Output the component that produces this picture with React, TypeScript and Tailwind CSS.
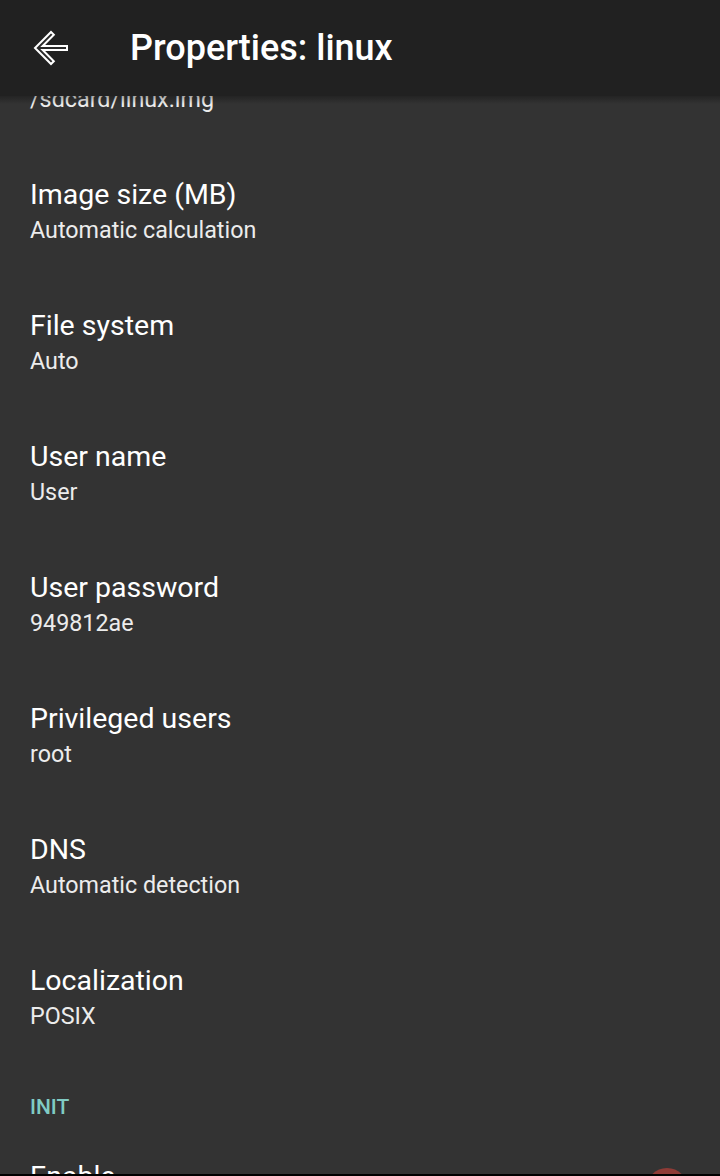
const rows = [
  { title: 'Image location', value: '/sdcard/linux.img' },
  { title: 'Image size (MB)', value: 'Automatic calculation' },
  { title: 'File system', value: 'Auto' },
  { title: 'User name', value: 'User' },
  { title: 'User password', value: '949812ae' },
  { title: 'Privileged users', value: 'root' },
  { title: 'DNS', value: 'Automatic detection' },
  { title: 'Localization', value: 'POSIX' },
];

const BackArrow = () => (
  <svg width="48" height="48" viewBox="0 0 24 24" className="shrink-0">
    <path
      d="M20 11H7.83l5.59-5.59L12 4l-8 8 8 8 1.41-1.41L7.83 13H20v-2z"
      fill="#2a2a2a"
      stroke="#ffffff"
      strokeWidth="1"
      strokeLinejoin="miter"
    />
  </svg>
);

const Row = ({ title, value }: { title: string; value: string }) => (
  <div className="h-[131px] flex flex-col justify-center px-[30px]">
    <div className="text-[28.5px] leading-[34px] text-white whitespace-nowrap">{title}</div>
    <div className="text-[23.3px] leading-[36px] text-[#ececec] whitespace-nowrap">{value}</div>
  </div>
);

const App = () => {
  return (
    <div className="relative h-[1176px] w-[720px] overflow-hidden bg-[#333333] font-['Roboto','Liberation_Sans',sans-serif] flex flex-col">
      {/* Toolbar */}
      <div className="absolute top-0 left-0 right-0 z-10">
        <div className="h-[96px] bg-[#212121] flex items-center pl-[27px]">
          <BackArrow />
          <h1 className="ml-[55px] text-[36px] font-medium text-white">Properties: linux</h1>
        </div>
        <div className="h-[8px] bg-gradient-to-b from-black/30 to-transparent" />
      </div>

      {/* Scrolled preference list */}
      <div className="flex-1 pt-[16px]">
        {rows.map((r) => (
          <Row key={r.title} title={r.title} value={r.value} />
        ))}

        <div className="h-[66px] px-[30px] pt-[31px]">
          <div className="text-[21px] leading-[24px] font-medium text-[#80cbc4]">INIT</div>
        </div>

        <div className="h-[131px] flex items-start justify-between px-[30px] pt-[30px]">
          <div className="text-[28.5px] leading-[34px] text-white">Enable</div>
          <div className="relative w-[72px] h-[42px] mr-[-6px] mt-[8px]">
            <div className="absolute left-[6px] right-[6px] top-[12px] h-[18px] rounded-full bg-[#7a3a36]/60" />
            <div className="absolute right-[8px] top-0 w-[42px] h-[42px] rounded-full bg-[#8e3b36]" />
          </div>
        </div>
      </div>

      <div className="absolute bottom-0 left-0 right-0 h-[2px] bg-black" />
    </div>
  );
};

export default App;
